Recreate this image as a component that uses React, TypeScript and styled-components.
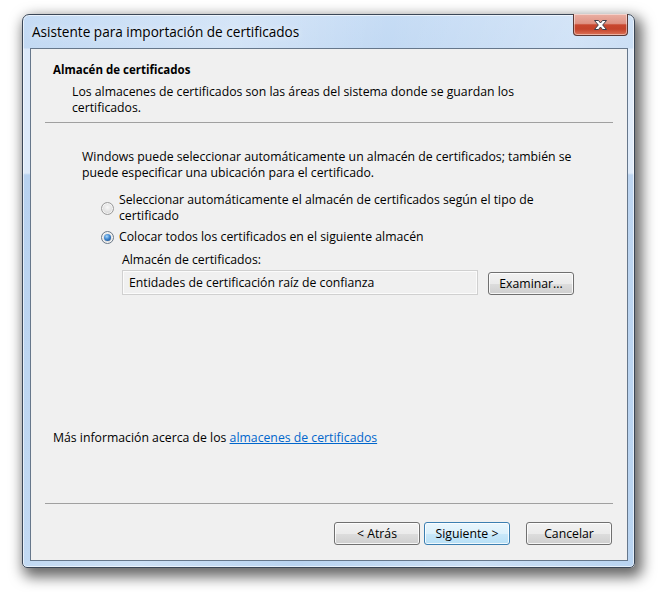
import React from "react";
import styled, { createGlobalStyle } from "styled-components";

const GlobalStyle = createGlobalStyle`
  html, body {
    margin: 0;
    background: #ffffff;
  }
  body {
    font-family: "Open Sans", "Noto Sans", Arial, sans-serif;
    font-size: 12.25px;
    line-height: 16px;
    color: #000000;
  }
`;

const Desktop = styled.div`
  width: 661px;
  height: 592px;
  box-sizing: border-box;
  padding: 14px 0 0 22px;
  overflow: hidden;
`;

const Window = styled.div`
  width: 613px;
  height: 554px;
  box-sizing: border-box;
  display: flex;
  flex-direction: column;
  border: 1px solid #3b4757;
  border-radius: 7px 7px 5px 5px;
  background:
    linear-gradient(
      100deg,
      rgba(255, 255, 255, 0) 0%,
      rgba(255, 255, 255, 0.28) 30%,
      rgba(255, 255, 255, 0) 52%,
      rgba(255, 255, 255, 0.25) 78%,
      rgba(255, 255, 255, 0) 100%
    ),
    linear-gradient(
      180deg,
      #c6dcf5 0px,
      #c2d9f3 33px,
      #dce9f9 34px,
      #dce9f9 158px,
      #b5d0ef 160px,
      #b9d4f1 100%
    );
  box-shadow: inset 0 0 0 1px rgba(255, 255, 255, 0.6),
    4px 6px 14px 3px rgba(0, 0, 0, 0.6);
`;

const TitleBar = styled.div`
  flex: none;
  height: 33px;
  display: flex;
  align-items: flex-start;
  padding-left: 9px;
`;

const Title = styled.div`
  flex: 1;
  align-self: center;
  font-size: 13.6px;
  color: #000000;
  text-shadow: 0 0 6px rgba(255, 255, 255, 0.9);
`;

const CloseButton = styled.button`
  width: 55px;
  height: 22px;
  margin: -1px 6px 0 0;
  padding: 0;
  display: flex;
  align-items: center;
  justify-content: center;
  border: 1px solid #5a3733;
  border-top: none;
  border-radius: 0 0 4px 4px;
  background: linear-gradient(
    180deg,
    #eab0a4 0%,
    #df9283 45%,
    #c8472f 52%,
    #c4432b 72%,
    #dc7358 100%
  );
  box-shadow: inset 0 0 0 1px rgba(255, 255, 255, 0.45);
`;

const Client = styled.div`
  flex: 1;
  margin: 0 6px 6px 7px;
  display: flex;
  flex-direction: column;
  border: 1px solid #66778b;
  background: #f0f0f0;
`;

const Header = styled.div`
  padding: 13px 0 0 22px;
`;

const HeaderTitle = styled.div`
  font-weight: 700;
  font-size: 11.5px;
`;

const HeaderText = styled.div`
  width: 480px;
  margin: 6px 0 0 19px;
`;

const Separator = styled.div`
  height: 0;
  margin: ${({ $top }: { $top: number }) => $top}px 14px 0;
  border-top: 1px solid #a0a0a0;
`;

const Body = styled.div`
  flex: 1;
  display: flex;
  flex-direction: column;
  padding: 26px 0 57px 22px;
`;

const Intro = styled.div`
  width: 505px;
  margin-left: 29px;
`;

const RadioGroup = styled.div`
  margin: 11px 0 0 48px;
  display: flex;
  flex-direction: column;
  gap: 5px;
`;

const RadioOption = styled.label`
  display: flex;
  align-items: center;
  gap: 5px;
`;

const RadioMark = styled.span<{ $checked?: boolean }>`
  flex: none;
  width: 13px;
  height: 13px;
  box-sizing: border-box;
  border-radius: 50%;
  border: 1px solid ${({ $checked }) => ($checked ? "#6c7a89" : "#9a9a9a")};
  background: radial-gradient(
    circle at 50% 40%,
    #f8f8f8 0%,
    #e4e4e4 45%,
    #c9c9c9 100%
  );
  box-shadow: inset 0 0 0 1px rgba(255, 255, 255, 0.7);
  display: flex;
  align-items: center;
  justify-content: center;

  &::after {
    content: "";
    display: ${({ $checked }) => ($checked ? "block" : "none")};
    width: 7px;
    height: 7px;
    border-radius: 50%;
    background: radial-gradient(
      circle at 40% 35%,
      #a9d8fa 0%,
      #3f86cf 45%,
      #0f3f7c 100%
    );
  }
`;

const RadioText = styled.span`
  width: 445px;
`;

const StoreBlock = styled.div`
  margin: 2px 0 0 21px;
`;

const FieldRow = styled.div`
  margin-top: 2px;
  display: flex;
  align-items: flex-end;
  gap: 10px;
`;

const ReadOnlyBox = styled.div`
  width: 356px;
  height: 25px;
  box-sizing: border-box;
  padding: 0 6px;
  display: flex;
  align-items: center;
  border: 1px solid #d0d0d0;
  box-shadow: inset 0 0 0 1px #fbfbfb;
  background: #f0f0f0;
`;

const Button = styled.button<{ $default?: boolean }>`
  width: 86px;
  height: 23px;
  padding: 0;
  font-family: inherit;
  font-size: 12.25px;
  color: #000000;
  border-radius: 3px;
  border: 1px solid ${({ $default }) => ($default ? "#3c7fb1" : "#707070")};
  background: ${({ $default }) =>
    $default
      ? "linear-gradient(180deg, #eaf6fd 0%, #dcf1fc 50%, #c9e8fa 51%, #b8e0f6 100%)"
      : "linear-gradient(180deg, #f2f2f2 0%, #ebebeb 50%, #dddddd 51%, #cfcfcf 100%)"};
  box-shadow: inset 0 0 0 1px rgba(255, 255, 255, 0.8);
`;

const InfoLine = styled.div`
  margin-top: auto;
`;

const Link = styled.a`
  color: #0066cc;
  text-decoration: underline;
`;

const ButtonRow = styled.div`
  display: flex;
  justify-content: flex-end;
  padding: 18px 15px 15px 0;
`;

const ButtonGroup = styled.div`
  display: flex;
  gap: ${({ $gap }: { $gap: number }) => $gap}px;
  margin-left: 16px;
`;

const CloseGlyph = () => (
  <svg width="15" height="12" viewBox="0 0 15 12">
    <path
      d="M1.5 1.5 H5.5 L7.5 4 L9.5 1.5 H13.5 L9.7 6 L13.5 10.5 H9.5 L7.5 8 L5.5 10.5 H1.5 L5.3 6 Z"
      fill="#ffffff"
      stroke="#3d3f4a"
      strokeWidth="1"
      strokeLinejoin="round"
    />
  </svg>
);

const App: React.FC = () => {
  return (
    <>
      <GlobalStyle />
      <Desktop>
        <Window>
          <TitleBar>
            <Title>Asistente para importación de certificados</Title>
            <CloseButton aria-label="Cerrar">
              <CloseGlyph />
            </CloseButton>
          </TitleBar>
          <Client>
            <Header>
              <HeaderTitle>Almacén de certificados</HeaderTitle>
              <HeaderText>
                Los almacenes de certificados son las áreas del sistema donde se
                guardan los certificados.
              </HeaderText>
            </Header>
            <Separator $top={6} />
            <Body>
              <Intro>
                Windows puede seleccionar automáticamente un almacén de
                certificados; también se puede especificar una ubicación para el
                certificado.
              </Intro>
              <RadioGroup>
                <RadioOption>
                  <RadioMark />
                  <RadioText>
                    Seleccionar automáticamente el almacén de certificados según
                    el tipo de certificado
                  </RadioText>
                </RadioOption>
                <RadioOption>
                  <RadioMark $checked />
                  <RadioText>
                    Colocar todos los certificados en el siguiente almacén
                  </RadioText>
                </RadioOption>
                <StoreBlock>
                  <div>Almacén de certificados:</div>
                  <FieldRow>
                    <ReadOnlyBox>
                      Entidades de certificación raíz de confianza
                    </ReadOnlyBox>
                    <Button>Examinar...</Button>
                  </FieldRow>
                </StoreBlock>
              </RadioGroup>
              <InfoLine>
                Más información acerca de los{" "}
                <Link href="#">almacenes de certificados</Link>
              </InfoLine>
            </Body>
            <Separator $top={0} />
            <ButtonRow>
              <ButtonGroup $gap={4}>
                <Button>&lt; Atrás</Button>
                <Button $default>Siguiente &gt;</Button>
              </ButtonGroup>
              <ButtonGroup $gap={0}>
                <Button>Cancelar</Button>
              </ButtonGroup>
            </ButtonRow>
          </Client>
        </Window>
      </Desktop>
    </>
  );
};

export default App;
